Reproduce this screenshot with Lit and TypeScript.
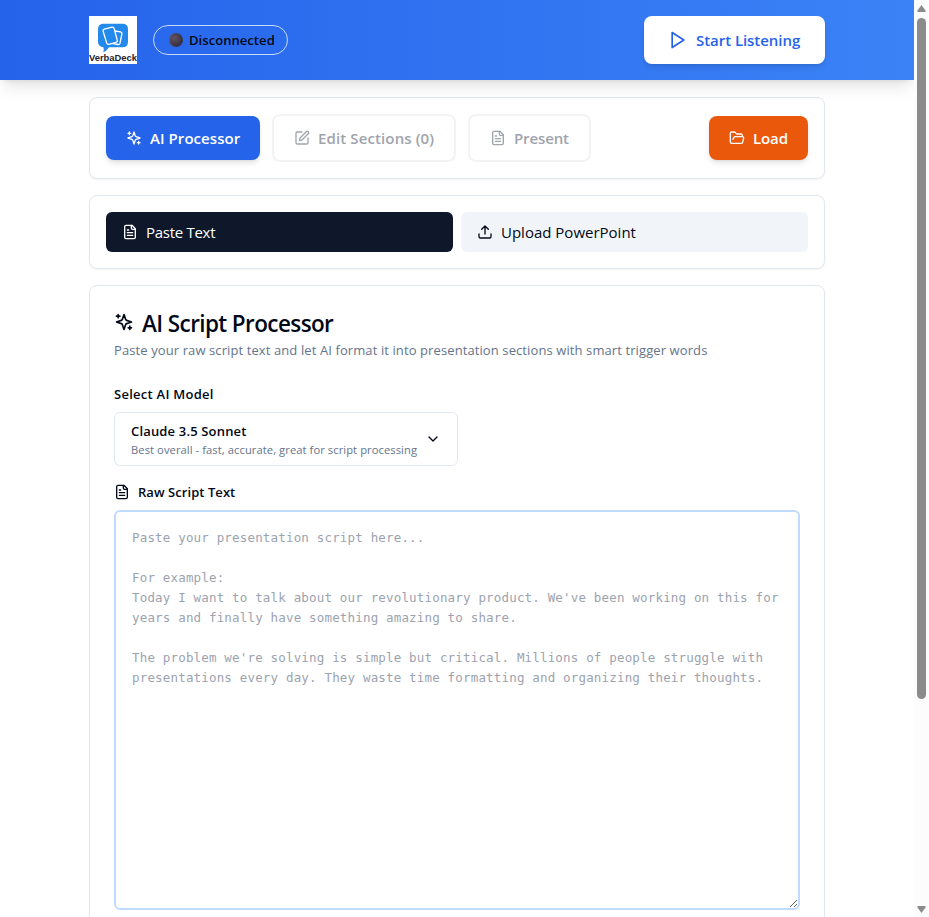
import { LitElement, html, css, svg } from "lit";
import { customElement } from "lit/decorators.js";

const icon = (body: unknown, cls = "") => html`<svg class="icon ${cls}" viewBox="0 0 24 24" fill="none"
  stroke="currentColor" stroke-width="2" stroke-linecap="round" stroke-linejoin="round">${body}</svg>`;

const sparkles = svg`<path d="m12 3-1.9 5.8a2 2 0 0 1-1.3 1.3L3 12l5.8 1.9a2 2 0 0 1 1.3 1.3L12 21l1.9-5.8a2 2 0 0 1 1.3-1.3L21 12l-5.8-1.9a2 2 0 0 1-1.3-1.3L12 3Z"/><path d="M5 3v4M19 17v4M3 5h4M17 19h4"/>`;
const edit = svg`<path d="M12 3H5a2 2 0 0 0-2 2v14a2 2 0 0 0 2 2h14a2 2 0 0 0 2-2v-7"/><path d="M18.375 2.625a1 1 0 0 1 3 3l-9.013 9.014a2 2 0 0 1-.853.505l-2.873.84a.5.5 0 0 1-.62-.62l.84-2.873a2 2 0 0 1 .506-.852z"/>`;
const file = svg`<path d="M15 2H6a2 2 0 0 0-2 2v16a2 2 0 0 0 2 2h12a2 2 0 0 0 2-2V7Z"/><path d="M14 2v4a2 2 0 0 0 2 2h4M10 9H8M16 13H8M16 17H8"/>`;
const folder = svg`<path d="m6 14 1.5-2.9A2 2 0 0 1 9.24 10H20a2 2 0 0 1 1.94 2.5l-1.54 6a2 2 0 0 1-1.95 1.5H4a2 2 0 0 1-2-2V5a2 2 0 0 1 2-2h3.9a2 2 0 0 1 1.69.9l.81 1.2a2 2 0 0 0 1.67.9H18a2 2 0 0 1 2 2v2"/>`;
const upload = svg`<path d="M21 15v4a2 2 0 0 1-2 2H5a2 2 0 0 1-2-2v-4M17 8l-5-5-5 5M12 3v12"/>`;
const play = svg`<path d="M5 3 19 12 5 21Z"/>`;
const chevron = svg`<path d="m6 9 6 6 6-6"/>`;

const sample = `Paste your presentation script here...

For example:
Today I want to talk about our revolutionary product. We've been working on this for years and finally have something amazing to share.

The problem we're solving is simple but critical. Millions of people struggle with presentations every day. They waste time formatting and organizing their thoughts.`;

@customElement("app-root")
export class AppRoot extends LitElement {
  static styles = css`
    :host { display: flex; width: 100%; height: 917px; overflow: hidden; background: #fff; color: #020817;
      font-family: "Open Sans", "Noto Sans", sans-serif; font-size: 15px; line-height: 24px; }
    * { box-sizing: border-box; }
    button { font: inherit; color: inherit; border: 0; margin: 0; text-align: left; white-space: nowrap; }
    .icon { width: 16px; height: 16px; flex: none; display: block; }
    .page { flex: 1; min-width: 0; height: 917px; overflow: hidden; }
    .header { position: relative; height: 80px; padding: 0 89px; display: flex; align-items: center;
      background: linear-gradient(90deg, #2563eb, #3b82f6);
      box-shadow: 0 10px 15px -3px rgba(0,0,0,.1), 0 4px 6px -4px rgba(0,0,0,.1); }
    .logo { width: 48px; height: 48px; display: block; }
    .status { margin-left: 16px; width: 135px; height: 30px; border: 1px solid rgba(255,255,255,.75); border-radius: 15px;
      display: flex; align-items: center; padding-left: 15px; gap: 6px; font-size: 13px; font-weight: 600; }
    .status span { letter-spacing: .06px; }
    .dot { width: 14px; height: 14px; border-radius: 50%;
      background: radial-gradient(circle at 38% 35%, #62535f, #40384a 50%, #292638 100%); box-shadow: inset 1px 0 0 #695a6b; }
    .listen { margin-left: auto; width: 181px; height: 48px; border-radius: 8px; background: #fff; color: #2563eb;
      display: flex; align-items: center; padding: 0 0 0 24px; gap: 8px; font-weight: 600; letter-spacing: -.05px;
      box-shadow: 0 4px 6px -1px rgba(0,0,0,.1), 0 2px 4px -2px rgba(0,0,0,.1); }
    .play { width: 20px; height: 20px; }
    .main { padding: 17px 89px 0; display: flex; flex-direction: column; gap: 16px; }
    .card { border: 1px solid #e2e8f0; border-radius: 8px; background: #fff; box-shadow: 0 1px 2px rgba(0,0,0,.05); }
    .nav { height: 82px; padding: 0 16px; display: flex; align-items: center; gap: 12px; }
    .btn { height: 44px; border-radius: 8px; padding: 0 0 0 20px; display: flex; align-items: center; gap: 8px; font-weight: 600; }
    .primary { width: 154px; background: #2563eb; color: #fff; letter-spacing: .06px; box-shadow: 0 4px 6px -1px rgba(0,0,0,.1), 0 2px 4px -2px rgba(0,0,0,.1); }
    .ghost { height: 48px; border: 2px solid #f3f3f4; background: #fff; color: #a0a4ad; }
    .sections { width: 184px; letter-spacing: .12px; }
    .present { width: 123px; letter-spacing: -.12px; }
    .load { margin-left: auto; width: 99px; background: #ea580c; color: #fff; letter-spacing: -.1px; box-shadow: 0 4px 6px -1px rgba(0,0,0,.1), 0 2px 4px -2px rgba(0,0,0,.1); }
    .tabs { height: 74px; padding: 16px; display: grid; grid-template-columns: 1fr 1fr; gap: 8px; }
    .tab { height: 40px; border-radius: 6px; background: #f1f5f9; padding: 0 16px; display: flex; align-items: center; gap: 8px; }
    .active { background: #0f172a; color: #fff; letter-spacing: -.28px; }
    .editor { height: 700px; padding: 24px; }
    .title { margin: 0; display: flex; align-items: center; gap: 8px; height: 28px; font-size: 22.5px; font-weight: 600; letter-spacing: -.6px; line-height: 28px; }
    .spark { width: 20px; height: 20px; margin-top: -4px; }
    .sub { margin: 2px 0 0; font-size: 13px; line-height: 20px; letter-spacing: .1px; color: #64748b; white-space: nowrap; }
    .label { margin-top: 24px; font-size: 13px; line-height: 20px; font-weight: 600; letter-spacing: .26px; }
    .select { margin-top: 8px; width: 344px; height: 54px; border: 1px solid #e2e8f0; border-radius: 6px; background: #fff;
      display: flex; align-items: center; justify-content: space-between; padding: 0 16px; }
    .name { font-size: 13px; line-height: 20px; font-weight: 600; letter-spacing: .17px; }
    .desc { padding-top: 1px; margin-bottom: -1px; font-size: 11.2px; line-height: 16px; letter-spacing: .07px; color: #64748b; }
    .raw { margin-top: 16px; display: flex; align-items: center; gap: 8px; font-size: 13px; line-height: 20px; font-weight: 600; letter-spacing: .06px; }
    .area { display: block; margin-top: 8px; width: 686px; height: 400px; border: 2px solid #bfdbfe; border-radius: 6px; padding: 16px;
      outline: 0; background: #fff; resize: vertical; font-family: "DejaVu Sans Mono", "Liberation Mono", monospace; font-size: 12.5px; line-height: 20px; letter-spacing: .172px; }
    .area::placeholder { color: #9ca3af; opacity: 1; }
    .scroll { width: 15px; height: 917px; flex: none; background: #fcfcfc; display: flex; flex-direction: column; align-items: center; }
    .thumb { width: 9px; height: 681px; border-radius: 5px; background: #8b8b8b; }
    .arrow { width: 9px; height: 18px; display: block; fill: #8b8b8b; }
    .down { margin-top: auto; }
  `;

  render() {
    return html`
      <div class="page">
        <header class="header">
          <svg class="logo" viewBox="0 0 48 48">
            <rect width="48" height="48" fill="#fff"/>
            <path d="M14.500 7.700h19q5.500 0 5.500 5.500v12.600q0 5.500-5.500 5.500H20q-2.500 4-5.800 5 1-2.500.3-5-5.500-.6-5.500-5.500V13.200q0-5.500 5.500-5.500Z" fill="#2389ed"/>
            <g stroke="#fff" stroke-width="1.300" stroke-linejoin="round" fill="#2389ed">
              <path d="m26 15 5.500.8q1.700.4 1.400 2l-1.900 9.400q-.4 1.600-2 1.300l-6-1.200Z"/>
              <path d="m15.300 13.200 7.800-2q1.600-.4 2 1.200l3.200 12q.4 1.600-1.200 2l-7.300 1.900q-1.600.4-2-1.200l-3.700-11.900q-.4-1.600 1.200-2Z"/>
            </g>
            <text x="0" y="45" textLength="48" lengthAdjust="spacingAndGlyphs" font-family="Liberation Sans, sans-serif" font-size="9.500" font-weight="700" fill="#1f2430">VerbaDeck</text>
          </svg>
          <div class="status"><i class="dot"></i><span>Disconnected</span></div>
          <button class="listen">${icon(play, "play")}<span>Start Listening</span></button>
        </header>
        <main class="main">
          <nav class="card nav">
            <button class="btn primary">${icon(sparkles)}<span>AI Processor</span></button>
            <button class="btn ghost sections">${icon(edit)}<span>Edit Sections (0)</span></button>
            <button class="btn ghost present">${icon(file)}<span>Present</span></button>
            <button class="btn load">${icon(folder)}<span>Load</span></button>
          </nav>
          <div class="card tabs">
            <button class="tab active">${icon(file)}<span>Paste Text</span></button>
            <button class="tab">${icon(upload)}<span>Upload PowerPoint</span></button>
          </div>
          <section class="card editor">
            <h3 class="title">${icon(sparkles, "spark")}<span>AI Script Processor</span></h3>
            <p class="sub">Paste your raw script text and let AI format it into presentation sections with smart trigger words</p>
            <div class="label">Select AI Model</div>
            <button class="select">
              <div><div class="name">Claude 3.5 Sonnet</div><div class="desc">Best overall - fast, accurate, great for script processing</div></div>
              ${icon(chevron)}
            </button>
            <div class="raw">${icon(file)}<span>Raw Script Text</span></div>
            <textarea class="area" spellcheck="false" placeholder=${sample}></textarea>
          </section>
        </main>
      </div>
      <div class="scroll">
        <svg class="arrow" viewBox="0 0 9 18"><path d="M4.500 5 8.500 10.500Q9 12 8 12H1Q0 12 .5 10.500Z"/></svg>
        <div class="thumb"></div>
        <svg class="arrow down" viewBox="0 0 9 18"><path d="M4.500 14 .5 8.500Q0 7 1 7H8Q9 7 8.500 8.500Z"/></svg>
      </div>`;
  }
}
